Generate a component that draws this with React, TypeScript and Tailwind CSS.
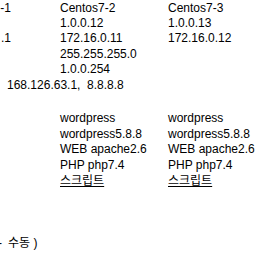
export default function App() {
  const top: [string, string, string][] = [
    ["-1", "Centos7-2", "Centos7-3"],
    ["", "1.0.0.12", "1.0.0.13"],
    [".1", "172.16.0.11", "172.16.0.12"],
    ["", "255.255.255.0", ""],
    ["", "1.0.0.254", ""],
  ];
  const bottom: string[] = ["wordpress", "wordpress5.8.8", "WEB apache2.6", "PHP php7.4"];
  return (
    <div
      className="w-[276px] h-[260px] overflow-hidden bg-white pt-[0.5px] text-[12px] text-black"
      style={{ fontFamily: '"Liberation Sans", "Noto Sans CJK KR", sans-serif' }}
    >
      <div className="grid grid-cols-[60px_108px_1fr] leading-[15.4px]">
        {top.map((r, i) => (
          <div key={i} className="contents">
            <div className="w-[11px] overflow-hidden whitespace-nowrap text-right">{r[0]}</div>
            <div className="whitespace-nowrap">{r[1] || "\u00a0"}</div>
            <div className="whitespace-nowrap">{r[2]}</div>
          </div>
        ))}
        <div className="col-span-3 pl-[7px] whitespace-nowrap">168.126.63.1,{"\u00a0 "}8.8.8.8</div>
      </div>
      <div className="mt-[18px] grid grid-cols-[60px_108px_1fr] leading-[15.7px]">
        {bottom.map((t, i) => (
          <div key={i} className="contents">
            <div />
            <div className="whitespace-nowrap">{t}</div>
            <div className="whitespace-nowrap">{t}</div>
          </div>
        ))}
        <div />
        <div className="whitespace-nowrap underline">스크립트</div>
        <div className="whitespace-nowrap underline">스크립트</div>
      </div>
      <div className="mt-[47px] flex leading-[15.4px] whitespace-nowrap">
        <span className="-ml-[2px]">-</span>
        <span className="ml-[6px]">수동 )</span>
      </div>
    </div>
  );
}
